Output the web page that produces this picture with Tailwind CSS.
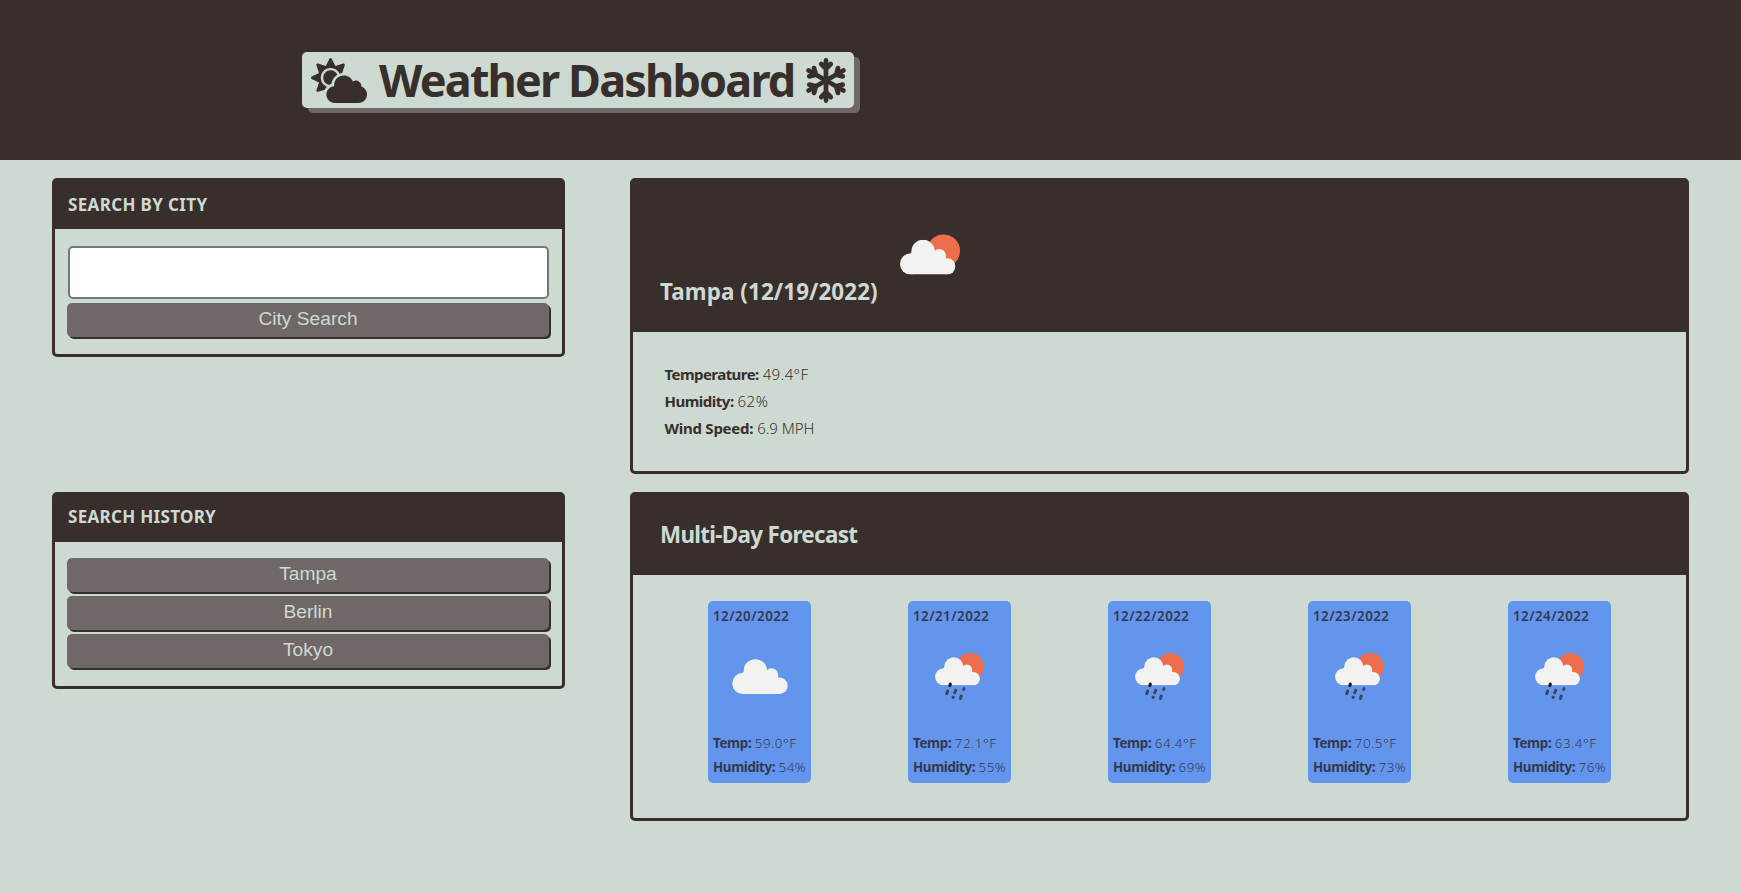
<!DOCTYPE html>
<html lang="en">
<head>
<meta charset="utf-8">
<title>Weather Dashboard</title>
<script src="https://cdn.jsdelivr.net/npm/@tailwindcss/browser@4"></script>
</head>
<body class="min-h-screen bg-[#cddad1] text-[#382f2d] font-['Noto_Sans',sans-serif]">
<svg class="hidden">
  <symbol id="cloud" viewBox="0 0 168 106"><g fill="#f2f2f0"><circle cx="32" cy="74" r="32"/><circle cx="70" cy="36" r="35.500"/><circle cx="119" cy="48" r="20"/><circle cx="143" cy="81" r="25"/><path d="M32 40L70 30L105 50L119 40L139 50V62L143 70V106H32Z"/></g></symbol>
  <symbol id="shower" viewBox="0 0 147 141">
    <circle cx="106" cy="41" r="41" fill="#ec6e4c"/>
    <use href="#cloud" x="0" y="12" width="135" height="85"/>
    <g stroke="#3d4658" stroke-width="9" stroke-linecap="round"><path d="M46 93l-1.500 5" stroke="#111"/><path d="M38 114l-3 8"/><path d="M62 112l-3 7"/><path d="M87 107l-1 2"/><path d="M55 132l-1 1"/><path d="M79 129l-3 7"/></g>
  </symbol>
</svg>
<header class="h-40 bg-[#382f2d] pl-[302px] pt-[52px]">
  <h1 class="flex h-14 w-[552px] items-center rounded-[5px] bg-[#cddad1] pl-[9px] font-bold text-[45px] leading-[56px] tracking-[-1.850px] shadow-[6px_5px_0_#706866]">
    <svg class="w-14 h-[45px] shrink-0" viewBox="0 0 640 512" fill="currentColor"><path d="M575.2 325.7c.2-1.900.8-3.700.8-5.600 0-35.300-28.700-64-64-64-12.600 0-24.200 3.800-34.100 10-17.600-38.800-56.500-66-101.900-66-61.800 0-112 50.100-112 112 0 3 .7 5.800.9 8.700-49.600 3.700-88.900 44.700-88.900 95.300 0 53 43 96 96 96h272c53 0 96-43 96-96 0-42.100-27.200-77.400-64.800-90.400zm-430.400-22.600c-43.700-43.700-43.700-114.700 0-158.300 43.700-43.700 114.700-43.700 158.400 0 9.700 9.700 16.900 20.900 22.300 32.700 9.800-3.700 20.100-6 30.700-7.500L386 81.100c4-11.900-7.300-23.100-19.200-19.200L279 91.200 237.500 8.400C232-2.800 216-2.800 210.400 8.400L169 91.200 81.100 61.900C69.300 58 58 69.300 61.900 81.100l29.300 87.800-82.800 41.500c-11.200 5.600-11.200 21.500 0 27.100l82.800 41.400-29.300 87.800c-4 11.900 7.300 23.100 19.200 19.200l76.100-25.300c6.100-12.400 14-23.700 23.600-33.500-13.100-5.400-25.400-13.400-36-24zm-4.800-79.200c0 40.800 29.300 74.800 67.900 82.300 8-4.700 16.300-8.800 25.200-11.700 5.400-44.300 31-82.500 67.400-105C287.300 160.400 258 140 224 140c-46.300 0-84 37.600-84 83.900z"/></svg>
    <span class="ml-3 w-[427px] whitespace-nowrap">Weather Dashboard</span>
    <svg class="w-10 h-[45px] shrink-0" viewBox="0 0 448 512" fill="none" stroke="currentColor" stroke-width="54" stroke-linecap="round" stroke-linejoin="round"><g id="arm"><path d="M224 256V28M170 68l54 54 54-54"/></g><use href="#arm" transform="rotate(60 224 256)"/><use href="#arm" transform="rotate(120 224 256)"/><use href="#arm" transform="rotate(180 224 256)"/><use href="#arm" transform="rotate(240 224 256)"/><use href="#arm" transform="rotate(300 224 256)"/></svg>
  </h1>
</header>
<main class="grid grid-cols-[513px_1059px] grid-rows-[296px_329px] items-start gap-x-[65px] gap-y-[18.400px] pl-[52px] pt-[18px]">
  <section class="h-[179px] rounded-[5px] border-3 border-[#382f2d]">
    <h2 class="h-[47.500px] bg-[#382f2d] pl-[13px] text-[17px] font-bold leading-[47px] tracking-[0.350px] text-[#cddad1]">SEARCH BY CITY</h2>
    <div class="flex flex-col px-3 pt-[17.500px]">
      <input class="ml-px h-[53px] w-[481px] rounded-[5px] border-2 border-[#767676] bg-white" aria-label="City">
      <button class="mt-[3.500px] h-[34px] w-[482px] rounded-[5px] bg-[#706866] font-['Liberation_Sans',sans-serif] text-[19.200px] text-[#cddad1] shadow-[2px_2px_0_#382f2d]">City Search</button>
    </div>
  </section>
  <section class="h-[296px] rounded-[5px] border-3 border-[#382f2d]">
    <div class="flex h-[151.400px] items-end bg-[#382f2d] pb-6 pl-[27px] text-[#cddad1]">
      <h2 class="w-[240px] whitespace-nowrap text-[22.400px] font-bold leading-8 tracking-[0.100px]">Tampa (12/19/2022)</h2>
      <svg class="mb-[33.500px] h-[41px] w-[60px]" viewBox="0 0 182 122"><circle cx="132" cy="50" r="50" fill="#ec6e4c"/><use href="#cloud" y="16" width="168" height="106"/></svg>
    </div>
    <div class="pl-[31.500px] pt-[28.500px] text-[15px] leading-[27px]">
      <p><b class="tracking-[-0.550px]">Temperature:</b> <span class="font-light tracking-[0.400px]">49.4°F</span></p>
      <p><b class="tracking-[-0.500px]">Humidity:</b> <span class="font-light tracking-[0.500px]">62%</span></p>
      <p><b class="tracking-[-0.250px]">Wind Speed:</b> <span class="font-light tracking-[-0.050px]">6.9 MPH</span></p>
    </div>
  </section>
  <section class="h-[196.500px] rounded-[5px] border-3 border-[#382f2d]">
    <h2 class="h-[46.500px] bg-[#382f2d] pl-[13px] text-[17px] font-bold leading-[44px] tracking-[0.300px] text-[#cddad1]">SEARCH HISTORY</h2>
    <div class="flex flex-col gap-1 px-3 pt-4 font-['Liberation_Sans',sans-serif] text-[19.200px] text-[#cddad1]">
      <button class="h-[34px] w-[482px] rounded-[5px] bg-[#706866] shadow-[2px_2px_0_#382f2d]">Tampa</button>
      <button class="h-[34px] w-[482px] rounded-[5px] bg-[#706866] shadow-[2px_2px_0_#382f2d]">Berlin</button>
      <button class="h-[34px] w-[482px] rounded-[5px] bg-[#706866] shadow-[2px_2px_0_#382f2d]">Tokyo</button>
    </div>
  </section>
  <section class="h-[329px] rounded-[5px] border-3 border-[#382f2d]">
    <h2 class="h-[79.500px] bg-[#382f2d] pl-[27px] text-[22.400px] font-bold leading-[80px] tracking-[-0.680px] text-[#cddad1]">Multi-Day Forecast</h2>
    <div class="flex gap-[97px] pl-[75px] pt-[26.500px] text-[13.400px] leading-6 text-[#33384d]">
      <article class="h-[182px] w-[103px] shrink-0 whitespace-nowrap rounded-[5px] bg-[#6495ed] pl-[5px] pt-[3px]">
        <h3 class="font-semibold tracking-[0.450px]">12/20/2022</h3>
        <div class="h-[103px] pl-[19px] pt-[31px]"><svg class="h-[35px] w-[56px]"><use href="#cloud" width="56" height="35"/></svg></div>
        <p><b class="tracking-[-0.350px]">Temp:</b> <span class="font-light tracking-[0.500px]">59.0°F</span></p><p><b class="tracking-[-0.400px]">Humidity:</b> <span class="font-light tracking-[0.400px]">54%</span></p>
      </article>
      <article class="h-[182px] w-[103px] shrink-0 whitespace-nowrap rounded-[5px] bg-[#6495ed] pl-[5px] pt-[3px]">
        <h3 class="font-semibold tracking-[0.450px]">12/21/2022</h3>
        <div class="h-[103px] pl-[22px] pt-[25px]"><svg class="h-[47px] w-[49px]"><use href="#shower" width="49" height="47"/></svg></div>
        <p><b class="tracking-[-0.350px]">Temp:</b> <span class="font-light tracking-[0.500px]">72.1°F</span></p><p><b class="tracking-[-0.400px]">Humidity:</b> <span class="font-light tracking-[0.400px]">55%</span></p>
      </article>
      <article class="h-[182px] w-[103px] shrink-0 whitespace-nowrap rounded-[5px] bg-[#6495ed] pl-[5px] pt-[3px]">
        <h3 class="font-semibold tracking-[0.450px]">12/22/2022</h3>
        <div class="h-[103px] pl-[22px] pt-[25px]"><svg class="h-[47px] w-[49px]"><use href="#shower" width="49" height="47"/></svg></div>
        <p><b class="tracking-[-0.350px]">Temp:</b> <span class="font-light tracking-[0.500px]">64.4°F</span></p><p><b class="tracking-[-0.400px]">Humidity:</b> <span class="font-light tracking-[0.400px]">69%</span></p>
      </article>
      <article class="h-[182px] w-[103px] shrink-0 whitespace-nowrap rounded-[5px] bg-[#6495ed] pl-[5px] pt-[3px]">
        <h3 class="font-semibold tracking-[0.450px]">12/23/2022</h3>
        <div class="h-[103px] pl-[22px] pt-[25px]"><svg class="h-[47px] w-[49px]"><use href="#shower" width="49" height="47"/></svg></div>
        <p><b class="tracking-[-0.350px]">Temp:</b> <span class="font-light tracking-[0.500px]">70.5°F</span></p><p><b class="tracking-[-0.400px]">Humidity:</b> <span class="font-light tracking-[0.400px]">73%</span></p>
      </article>
      <article class="h-[182px] w-[103px] shrink-0 whitespace-nowrap rounded-[5px] bg-[#6495ed] pl-[5px] pt-[3px]">
        <h3 class="font-semibold tracking-[0.450px]">12/24/2022</h3>
        <div class="h-[103px] pl-[22px] pt-[25px]"><svg class="h-[47px] w-[49px]"><use href="#shower" width="49" height="47"/></svg></div>
        <p><b class="tracking-[-0.350px]">Temp:</b> <span class="font-light tracking-[0.500px]">63.4°F</span></p><p><b class="tracking-[-0.400px]">Humidity:</b> <span class="font-light tracking-[0.400px]">76%</span></p>
      </article>
    </div>
  </section>
</main>
</body>
</html>
